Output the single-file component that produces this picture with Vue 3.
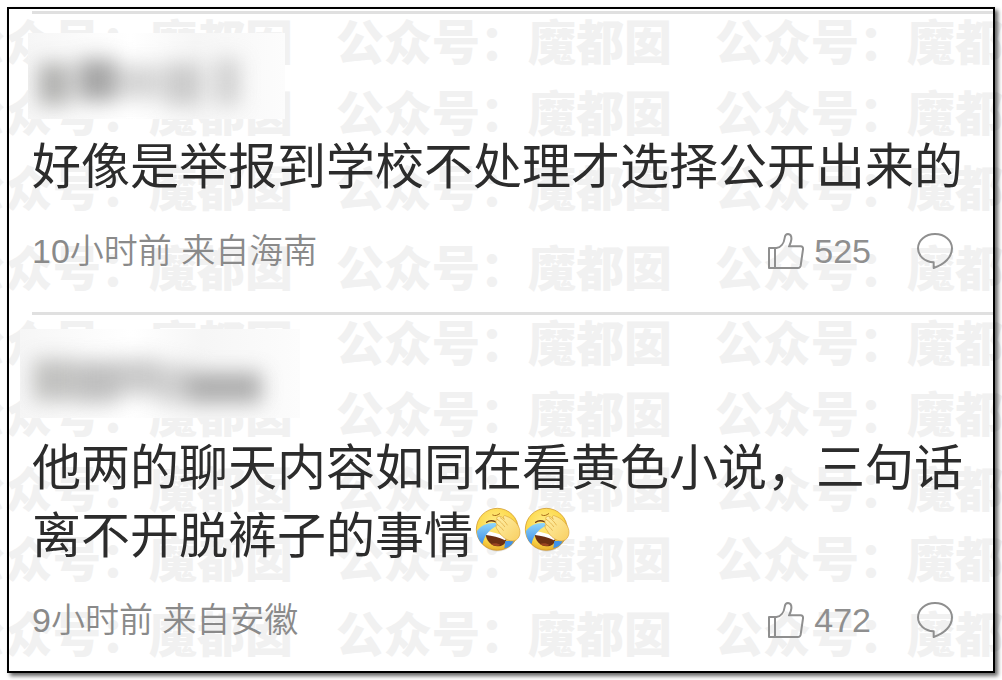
<script setup>
const watermarkRows = Array.from({ length: 9 }, (_, i) => i)
const watermarkTiles = Array.from({ length: 4 }, (_, i) => i)

const comments = [
  {
    id: 1,
    text: '好像是举报到学校不处理才选择公开出来的',
    laughs: 0,
    meta: '10小时前 来自海南',
    likes: 525,
    mask: {
      size: 'short',
      width: 257,
      height: 86,
      blobs: [
        { x: 10, y: 30, w: 32, h: 42, fill: '#a0a09e' },
        { x: 50, y: 26, w: 38, h: 42, fill: '#909090' },
        { x: 90, y: 32, w: 42, h: 34, fill: '#cacaca' },
        { x: 136, y: 30, w: 38, h: 42, fill: '#c0c0c0' },
        { x: 186, y: 26, w: 26, h: 46, fill: '#c8c8c8' }
      ]
    }
  },
  {
    id: 2,
    text: '他两的聊天内容如同在看黄色小说，三句话离不开脱裤子的事情',
    laughs: 2,
    meta: '9小时前 来自安徽',
    likes: 472,
    mask: {
      size: 'long',
      width: 280,
      height: 89,
      blobs: [
        { x: 13, y: 30, w: 42, h: 42, fill: '#b4b4b2' },
        { x: 56, y: 32, w: 42, h: 42, fill: '#b0b0b0' },
        { x: 98, y: 30, w: 42, h: 36, fill: '#bcbcbc' },
        { x: 138, y: 36, w: 34, h: 38, fill: '#c4c4c4' },
        { x: 168, y: 43, w: 74, h: 31, fill: '#9c9c9c' }
      ]
    }
  }
]
</script>

<template>
  <div class="page">
    <div class="watermark" aria-hidden="true">
      <div v-for="r in watermarkRows" :key="r" class="watermark-row">
        <span v-for="t in watermarkTiles" :key="t" class="watermark-tile">公众号：魔都囡</span>
      </div>
    </div>

    <main class="frame">
      <article v-for="c in comments" :key="c.id" class="comment">
        <header class="author">
          <svg
            class="mask"
            :class="c.mask.size"
            :viewBox="`0 0 ${c.mask.width} ${c.mask.height}`"
            aria-hidden="true"
          >
            <defs>
              <filter
                :id="`soft-${c.id}`"
                x="-30%"
                y="-60%"
                width="160%"
                height="220%"
                color-interpolation-filters="sRGB"
              >
                <feGaussianBlur stdDeviation="10" />
              </filter>
              <linearGradient :id="`haze-${c.id}`" x1="0" y1="0" x2="1" y2="0">
                <stop offset="0" stop-color="#f6f6f6" />
                <stop offset="0.4" stop-color="#ffffff" />
                <stop offset="0.65" stop-color="#f6f6f6" />
                <stop offset="1" stop-color="#fcfcfc" />
              </linearGradient>
            </defs>
            <rect :width="c.mask.width" :height="c.mask.height" :fill="`url(#haze-${c.id})`" />
            <g :filter="`url(#soft-${c.id})`" opacity="0.8">
              <rect
                v-for="(b, i) in c.mask.blobs"
                :key="i"
                :x="b.x"
                :y="b.y"
                :width="b.w"
                :height="b.h"
                :fill="b.fill"
              />
            </g>
          </svg>
        </header>

        <p class="text">{{ c.text }}<svg
            v-for="n in c.laughs"
            :key="n"
            class="emoji"
            viewBox="24 29 147 147"
            role="img"
            aria-label="笑哭捂脸"
          >
            <defs>
              <radialGradient :id="`face-${n}`" cx="0.45" cy="0.35" r="0.65">
                <stop offset="0" stop-color="#ffec86" />
                <stop offset="0.7" stop-color="#fcd848" />
                <stop offset="1" stop-color="#e8ae2c" />
              </radialGradient>
              <linearGradient :id="`tear-${n}`" x1="0" y1="0" x2="0" y2="1">
                <stop offset="0" stop-color="#8fd6fb" />
                <stop offset="1" stop-color="#3f8fe8" />
              </linearGradient>
              <linearGradient :id="`hand-${n}`" x1="0" y1="0" x2="1" y2="1">
                <stop offset="0" stop-color="#fff0a8" />
                <stop offset="1" stop-color="#f8cf62" />
              </linearGradient>
            </defs>
            <ellipse cx="98" cy="108" rx="60" ry="61" fill="#000" opacity="0.08" />
            <circle cx="97" cy="102" r="63" :fill="`url(#face-${n})`" stroke="#c98d1c" stroke-width="2" />
            <path d="M61 113 C80 115 106 121 124 130 C124 145 112 153 97 153 C78 152 64 137 61 113Z" fill="#6b2f12" />
            <path d="M62 107 C80 109 107 116 126 127 L120 135 C102 126 82 121 63 119Z" fill="#fff" />
            <path d="M78 146 C86 142 99 143 106 149 C98 154 85 152 78 146Z" fill="#9c4522" />
            <path d="M94 84 C76 79 48 88 36 107 C36 124 43 138 53 146 C57 124 70 105 94 92Z" :fill="`url(#tear-${n})`" />
            <path d="M121 137 L146 137 C141 149 132 156 118 159Z" fill="#3f92ea" />
            <path d="M65 81 C75 73 85 76 93 80" fill="none" stroke="#6e3a10" stroke-width="4" stroke-linecap="round" />
            <path d="M83 59 C91 63 97 60 104 55" fill="none" stroke="#a86b1a" stroke-width="3" stroke-linecap="round" />
            <path
              d="M98 65 C104 60 112 65 118 72 C112 62 117 58 125 63 C140 68 157 82 163 99 C169 118 160 136 143 137 C125 137 108 122 99 105 C92 98 91 88 97 88 C90 79 92 71 98 73 C93 69 95 65 98 65Z"
              :fill="`url(#hand-${n})`"
              stroke="#dba338"
              stroke-width="2"
              stroke-linejoin="round"
            />
            <path
              d="M98 73 C106 78 113 86 119 94 M97 88 C104 92 110 98 115 105 M106 67 C115 73 122 81 127 89"
              fill="none"
              stroke="#dba338"
              stroke-width="2"
              stroke-linecap="round"
            />
          </svg></p>

        <footer class="meta">
          <span class="source">{{ c.meta }}</span>
          <div class="actions">
            <button type="button" class="action" :aria-label="`赞 ${c.likes}`">
              <svg class="icon" viewBox="0 0 108 108" aria-hidden="true">
                <path d="M3 45 H21 V105 H3 Z M21 45 H25 C38 43 48 31 50 15 C51 6 55 3 60 3 C68 4 71 11 70 20 C69 29 66 34 63 40 H98 C103 40 106 44 105 49 L98 98 C97 103 94 105 90 105 H21" />
              </svg>
              <span>{{ c.likes }}</span>
            </button>
            <button type="button" class="action" aria-label="评论">
              <svg class="icon" viewBox="0 0 108 108" aria-hidden="true">
                <path d="M50 88 C23 86 3 69 3 46 C3 22 25 3 54 3 C83 3 105 22 105 46 C105 72 83 94 50 105 Z" />
              </svg>
            </button>
          </div>
        </footer>
      </article>
    </main>
  </div>
</template>

<style>
body {
  margin: 0;
  background: #fff;
}
</style>

<style scoped>
.page {
  position: relative;
  box-sizing: border-box;
  min-height: 100vh;
  padding: 7px;
  overflow: hidden;
  display: flex;
  font-family: "Liberation Sans", "Noto Sans CJK SC", sans-serif;
}

.watermark {
  position: absolute;
  inset: 0;
  overflow: hidden;
  display: grid;
  grid-template-rows: 71px 75px 80px 75px 71px 75px 70px 75px 75px;
  padding-top: 4px;
  color: #f1f1f1;
  font-family: "Noto Sans CJK SC", sans-serif;
  font-size: 48px;
  font-weight: 900;
  line-height: 71px;
}

.watermark-row {
  display: flex;
  margin-left: -43px;
}

.watermark-tile {
  flex: none;
  width: 379px;
  white-space: nowrap;
}

.frame {
  position: relative;
  flex: 1;
  min-width: 0;
  border: 2px solid #000;
  padding: 2px 0 0 23px;
  box-shadow: 3px 3px 4px rgba(0, 0, 0, 0.6);
}

.comment {
  border-top: 3px solid #e0e0e0;
  padding-bottom: 41px;
}

.comment:last-child {
  padding-bottom: 29px;
}

.author {
  display: flex;
  align-items: center;
  height: 119px;
}

.mask {
  display: block;
}

.mask.short {
  width: 257px;
  margin: 5px 0 0 -4px;
}

.mask.long {
  width: 280px;
  margin: -2px 0 0 -12px;
}

.text {
  margin: 0 24px 30px 0;
  color: #2c2c2c;
  font-size: 49px;
  line-height: 68px;
}

.emoji {
  width: 49px;
  height: 49px;
  vertical-align: -1px;
}

.meta {
  display: flex;
  align-items: center;
  justify-content: space-between;
  height: 40px;
  padding-right: 40px;
  color: #8f8f8f;
  font-size: 34px;
  line-height: 40px;
}

.source {
  color: #8a8a8a;
  font-weight: 350;
}

.actions {
  display: flex;
  align-items: center;
  gap: 46px;
}

.action {
  display: flex;
  align-items: center;
  gap: 10px;
  padding: 0;
  border: 0;
  background: none;
  color: inherit;
  font: inherit;
  cursor: pointer;
}

.icon {
  width: 36px;
  height: 36px;
  fill: none;
  stroke: currentColor;
  stroke-width: 6;
  stroke-linejoin: round;
}
</style>
